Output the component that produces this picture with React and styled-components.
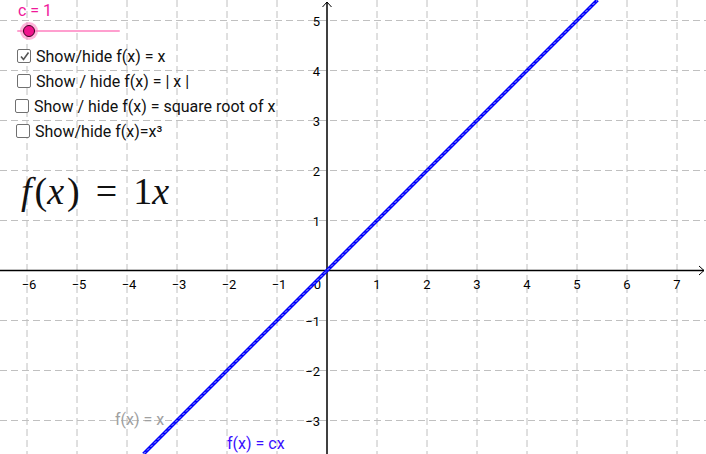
import React from "react";
import styled, { createGlobalStyle } from "styled-components";

const W = 706;
const H = 454;
const OX = 327;
const OY = 270.5;
const UNIT = 50;

const GlobalStyle = createGlobalStyle`
  html, body {
    margin: 0;
    padding: 0;
    background: #ffffff;
  }
  body {
    font-family: Roboto, "Liberation Sans", sans-serif;
  }
`;

const checks = [
  { id: 1, label: "Show/hide f(x) = x", checked: true, shift: 0 },
  { id: 2, label: "Show / hide f(x) = | x |", checked: false, shift: 0 },
  { id: 3, label: "Show / hide f(x) = square root of x", checked: false, shift: -2 },
  { id: 4, label: "Show/hide f(x)=x³", checked: false, shift: -1 },
];

const xTicks = [-6, -5, -4, -3, -2, -1, 1, 2, 3, 4, 5, 6, 7];
const yTicks = [5, 4, 3, 2, 1, -1, -2, -3];

const fmt = (n) => (n < 0 ? "\u2212" + Math.abs(n) : String(n));

function Graph() {
  const vLines = [];
  for (let i = -6; i <= 7; i++) vLines.push(OX + i * UNIT);
  const hLines = [];
  for (let j = -3; j <= 5; j++) if (j !== 0) hLines.push(OY - j * UNIT);

  // y = x line across the view
  const x1 = OX - (H - OY);
  const x2 = OX + OY;

  return (
    <Canvas width={W} height={H} viewBox={`0 0 ${W} ${H}`}>
      <g stroke="#c0c0c0" strokeWidth="1" strokeDasharray="7 4">
        {vLines.map((x) =>
          x === OX ? null : <line key={"v" + x} x1={x} y1={0} x2={x} y2={H} />
        )}
        {hLines.map((y) => (
          <line key={"h" + y} x1={0} y1={y} x2={W} y2={y} />
        ))}
      </g>

      <g stroke="#000" strokeWidth="1.5" fill="none">
        <line x1={0} y1={OY} x2={W - 2} y2={OY} />
        <line x1={OX} y1={H} x2={OX} y2={2} />
        <polyline points={`${W - 7},${OY - 4.5} ${W - 2},${OY} ${W - 7},${OY + 4.5}`} strokeWidth="1" />
        <polyline points={`${OX - 4.5},7 ${OX},2 ${OX + 4.5},7`} strokeWidth="1" />
      </g>

      <g fill="#000" fontSize="13" fontFamily="Roboto, 'Liberation Sans', sans-serif">
        {xTicks.map((t) => (
          <text key={"xt" + t} x={OX + t * UNIT + (t < 0 ? 2 : 0)} y={OY + 18} textAnchor="middle">
            {fmt(t)}
          </text>
        ))}
        <text x={OX - 6} y={OY + 18} textAnchor="end">0</text>
        {yTicks.map((t) => (
          <text key={"yt" + t} x={OX - 7} y={OY - t * UNIT + 5} textAnchor="end">
            {fmt(t)}
          </text>
        ))}
      </g>

      <line x1={x1} y1={H} x2={x2} y2={0} stroke="#0000ff" strokeWidth="3.5" />
      <line x1={x1} y1={H} x2={x2} y2={0} stroke="#b8b8e8" strokeWidth="1" strokeDasharray="3 2" />

      <text x={115} y={425} fill="#a0a0a0" fontSize="16" fontFamily="Roboto, 'Liberation Sans', sans-serif">
        f(x) = x
      </text>
      <text x={227} y={449} fill="#3a10ff" fontSize="16" fontFamily="Roboto, 'Liberation Sans', sans-serif">
        f(x) = cx
      </text>
    </Canvas>
  );
}

function CheckMark() {
  return (
    <svg width="11" height="11" viewBox="0 0 11 11">
      <polyline points="2,5.5 4.5,8.5 9.5,1.5" fill="none" stroke="#555" strokeWidth="1.6" />
    </svg>
  );
}

export default function App() {
  return (
    <>
      <GlobalStyle />
      <Applet>
        <Graph />
        <Panel>
          <SliderBlock>
            <SliderLabel>c = 1</SliderLabel>
            <Track>
              <Knob />
            </Track>
          </SliderBlock>
          <CheckList>
            {checks.map((c) => (
              <CheckRow key={c.id} $shift={c.shift}>
                <Box>{c.checked && <CheckMark />}</Box>
                <span>{c.label}</span>
              </CheckRow>
            ))}
          </CheckList>
          <Formula>
            <i>f</i>(<i>x</i>)<Eq>=</Eq>1<i>x</i>
          </Formula>
        </Panel>
      </Applet>
    </>
  );
}

const Applet = styled.div`
  position: relative;
  width: ${W}px;
  height: ${H}px;
  overflow: hidden;
  background: #ffffff;
`;

const Canvas = styled.svg`
  position: absolute;
  inset: 0;
  display: block;
`;

const Panel = styled.div`
  position: absolute;
  left: 0;
  top: 0;
  padding: 2px 0 0 17px;
  display: flex;
  flex-direction: column;
`;

const SliderBlock = styled.div`
  display: flex;
  flex-direction: column;
  gap: 5px;
  width: 103px;
`;

const SliderLabel = styled.div`
  color: #f0189a;
  font-size: 16px;
  line-height: 17px;
  padding-left: 1px;
`;

const Track = styled.div`
  position: relative;
  height: 2px;
  background: #ff9fcf;
  border-radius: 1px;
  margin-top: 6px;
`;

const Knob = styled.div`
  position: absolute;
  left: 6px;
  top: -5px;
  width: 12px;
  height: 12px;
  border-radius: 50%;
  background: #f0148c;
  border: 1px solid #3a0020;
  box-sizing: border-box;
  box-shadow: 0 0 0 3px rgba(255, 120, 190, 0.55);
`;

const CheckList = styled.div`
  display: flex;
  flex-direction: column;
  gap: 7px;
  margin-top: 15px;
`;

const CheckRow = styled.div`
  display: flex;
  align-items: center;
  gap: 5px;
  height: 18px;
  margin-left: ${(p) => p.$shift}px;
  font-size: 16px;
  color: #111;
  white-space: nowrap;
`;

const Box = styled.div`
  width: 14px;
  height: 14px;
  box-sizing: border-box;
  border: 1px solid #707070;
  border-radius: 2px;
  background: #fff;
  display: flex;
  align-items: center;
  justify-content: center;
`;

const Formula = styled.div`
  margin-top: 30px;
  margin-left: 4px;
  font-family: "Liberation Serif", "DejaVu Serif", serif;
  font-size: 38px;
  line-height: 42px;
  color: #111;
  white-space: nowrap;

  i {
    font-style: italic;
    padding-right: 3px;
  }
`;

const Eq = styled.span`
  margin: 0 16px;
`;
